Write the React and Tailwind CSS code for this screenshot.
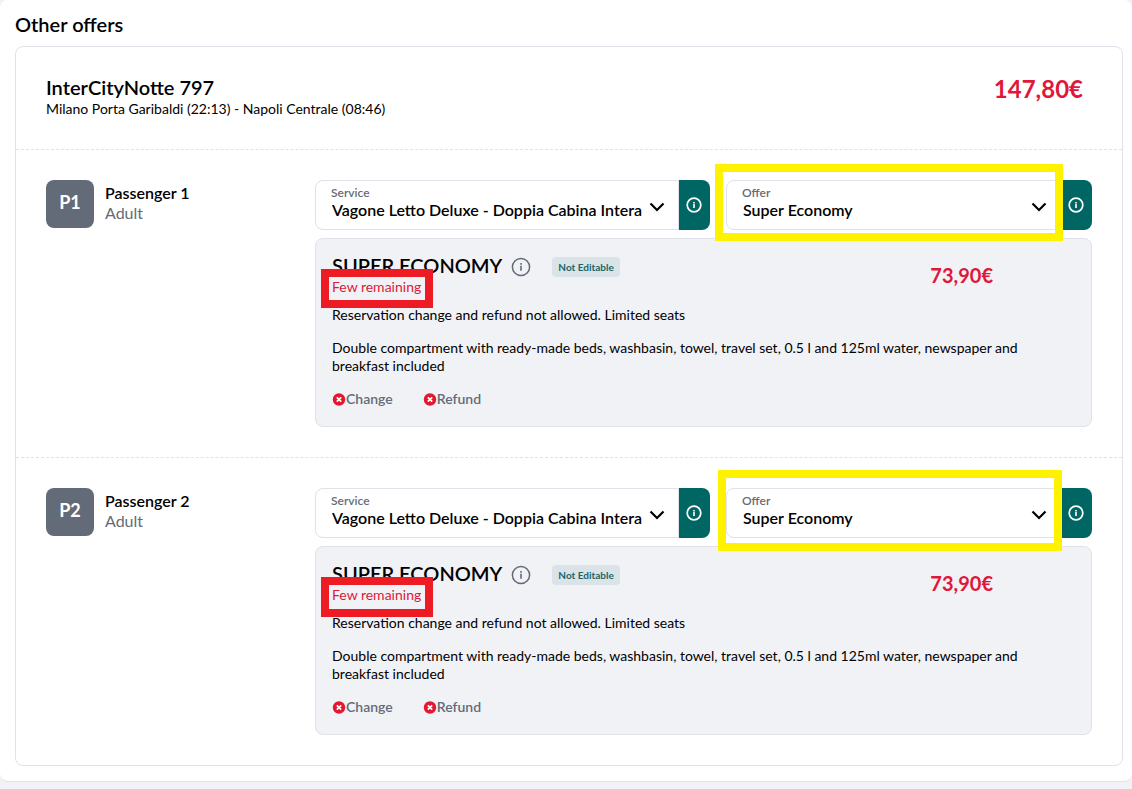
import React from "react";

const passengers = [
  {
    id: "P1",
    name: "Passenger 1",
    type: "Adult",
    price: "73,90€",
    offerMark: "-left-[11px] right-[29px] -top-4 -bottom-[11px]",
    noteMark: "h-[39px]",
  },
  {
    id: "P2",
    name: "Passenger 2",
    type: "Adult",
    price: "73,90€",
    offerMark: "-left-2 right-[30px] -top-[18px] -bottom-[13px]",
    noteMark: "h-[40px]",
  },
];

const InfoIcon = ({ className }) => (
  <svg viewBox="0 0 20 20" fill="none" stroke="currentColor" className={className} aria-hidden="true">
    <circle cx="10" cy="10" r="8.6" strokeWidth="1.5" />
    <path d="M10 8.8v5" strokeWidth="1.6" />
    <path d="M10 6v1.7" strokeWidth="1.6" />
  </svg>
);

const BoldInfoIcon = () => (
  <svg viewBox="0 0 16 16" fill="none" stroke="currentColor" className="size-4" aria-hidden="true">
    <circle cx="8" cy="8" r="6.8" strokeWidth="1.7" />
    <path d="M8 4.9v1.2M8 6.5v4.6" strokeWidth="1.6" />
  </svg>
);

const DeniedIcon = () => (
  <svg viewBox="0 0 14 14" className="size-[14px]" aria-hidden="true">
    <circle cx="7" cy="7.5" r="6.2" fill="#e3172f" />
    <path d="M4.8 5.3l4.4 4.4M9.2 5.3L4.8 9.7" stroke="#fff" strokeWidth="1.7" />
  </svg>
);

const SelectField = ({ id, label, value, mark = "", className = "" }) => (
  <div className={`relative flex h-[50px] min-w-0 ${className}`}>
    <div className="relative min-w-0 flex-1">
      <label htmlFor={id} className="absolute left-4 top-[5px] text-[12px] leading-4 font-semibold text-[#646b78]">
        {label}
      </label>
      <select
        id={id}
        className="h-full w-full appearance-none rounded-l-lg border border-[#e0e1e9] bg-white pt-[10px] pr-8 pl-4 text-[16px] font-semibold text-black"
      >
        <option>{value}</option>
      </select>
      <svg
        viewBox="0 0 16 10"
        fill="none"
        stroke="#000"
        strokeWidth="2.2"
        className="pointer-events-none absolute top-[22px] right-[14px] h-[10px] w-4"
        aria-hidden="true"
      >
        <path d="M1.5 1.5L8 8l6.5-6.5" />
      </svg>
    </div>
    <button
      type="button"
      aria-label={`${label} info`}
      className="flex w-[31px] shrink-0 items-center justify-center rounded-r-lg bg-[#006663] pr-0.5 text-white"
    >
      <BoldInfoIcon />
    </button>
    {mark && <span className={`pointer-events-none absolute z-10 border-8 border-[#fff200] ${mark}`} />}
  </div>
);

const OfferDetails = ({ price, noteMark }) => (
  <div className="relative mt-2 rounded-lg border border-[#e0e1e9] bg-[#f1f2f6] px-4 pt-4 pb-[18px]">
    <div className="flex">
      <div className="flex-1">
        <div className="flex h-[23px] items-center">
          <h4 className="pb-1 text-[20px] leading-6 font-semibold text-black">SUPER ECONOMY</h4>
          <button type="button" aria-label="Offer info" className="ml-[9px] text-[#646b78]">
            <InfoIcon className="size-5" />
          </button>
          <span className="ml-[21px] rounded bg-[#d9e3e8] px-[6px] text-[10px] leading-5 font-bold text-[#1c6469]">
            Not Editable
          </span>
        </div>
        <p className="text-[14px] leading-[18px] text-[#e0173a]">Few remaining</p>
      </div>
      <p className="mr-[82px] pt-2 text-[20px] leading-6 font-bold text-[#e0173a]">{price}</p>
    </div>
    <p className="mt-[10px] text-[14px] leading-[18px] text-black">
      Reservation change and refund not allowed. Limited seats
    </p>
    <p className="mt-[15px] mr-10 text-[14px] leading-[18px] text-black">
      Double compartment with ready-made beds, washbasin, towel, travel set, 0.5 l and 125ml water, newspaper and
      breakfast included
    </p>
    <ul className="mt-[15px] flex gap-[30px] text-[14px] leading-[18px] font-semibold text-[#646b78]">
      <li className="flex items-center">
        <DeniedIcon />
        Change
      </li>
      <li className="flex items-center">
        <DeniedIcon />
        Refund
      </li>
    </ul>
    <span
      className={`pointer-events-none absolute top-[30px] left-[5px] w-[112px] border-8 border-[#ed1c24] ${noteMark}`}
    />
  </div>
);

const PassengerRow = ({ passenger }) => (
  <div className="flex border-t border-dashed border-[#e0e1e9] p-[30px]">
    <div className="flex w-[269px] shrink-0 items-start">
      <div className="flex size-12 items-center justify-center rounded-lg bg-[#646b78] pb-1 text-[18px] font-bold text-white">
        {passenger.id}
      </div>
      <div className="ml-[11px] pt-[3px] text-[16px] leading-5">
        <h3 className="font-semibold text-black">{passenger.name}</h3>
        <p className="text-[#646b78]">{passenger.type}</p>
      </div>
    </div>
    <div className="min-w-0 flex-1">
      <div className="flex gap-4">
        <SelectField
          id={`${passenger.id}-service`}
          label="Service"
          value="Vagone Letto Deluxe - Doppia Cabina Intera"
          className="flex-[395]"
        />
        <SelectField
          id={`${passenger.id}-offer`}
          label="Offer"
          value="Super Economy"
          mark={passenger.offerMark}
          className="flex-[366]"
        />
      </div>
      <OfferDetails price={passenger.price} noteMark={passenger.noteMark} />
    </div>
  </div>
);

export default function App() {
  return (
    <main className="min-h-screen bg-[#f1f2f6] font-['Lato',sans-serif] text-black">
      <section className="rounded-lg border-b border-[#e0e1e9] bg-white pt-3 pr-[9px] pb-[15px] pl-[15px]">
        <h1 className="mb-[10px] text-[20px] leading-6 font-semibold">Other offers</h1>
        <div className="rounded-lg border border-[#e0e1e9]">
          <header className="flex justify-between px-[30px] pt-7 pb-[31px]">
            <div>
              <h2 className="mb-px text-[20px] leading-6 font-semibold">InterCityNotte 797</h2>
              <p className="text-[14px] leading-[18px]">Milano Porta Garibaldi (22:13) - Napoli Centrale (08:46)</p>
            </div>
            <p className="mr-[9px] text-[24px] leading-7 font-bold text-[#e0173a]">147,80€</p>
          </header>
          {passengers.map((passenger) => (
            <PassengerRow key={passenger.id} passenger={passenger} />
          ))}
        </div>
      </section>
    </main>
  );
}
